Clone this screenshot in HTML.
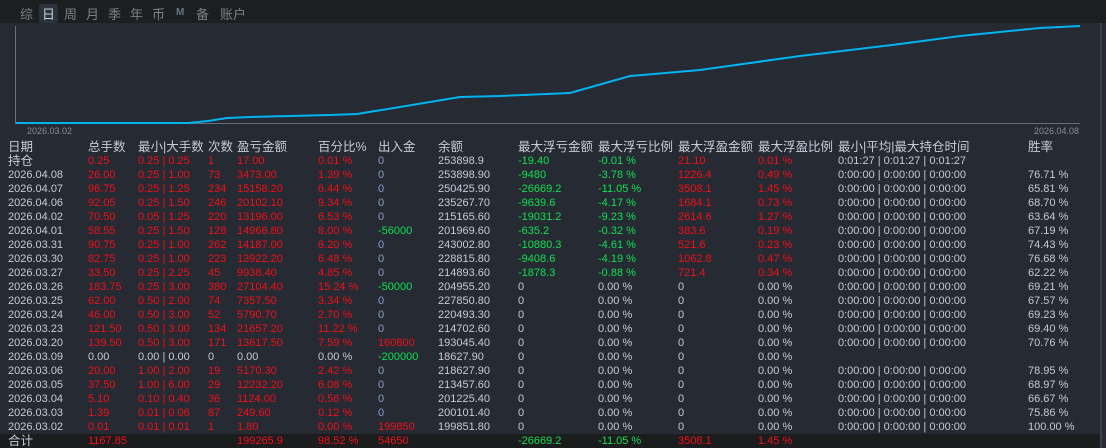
<!DOCTYPE html><html><head><meta charset="utf-8"><style>
body{margin:0;width:1106px;height:448px;background:#252a33;overflow:hidden;font-family:"Liberation Sans","Noto Sans CJK SC",sans-serif;position:relative}
.top{position:absolute;left:0;top:0;width:1106px;height:23px;background:#1d1e20}
.tab{position:absolute;top:4px;font-size:13px;color:#7d8088}
.sel{background:#2c323c;color:#c8ccd4;padding:0 3px;margin-left:-3px;border-radius:2px}
.r{position:absolute;left:0;height:14px;width:1100px;font-size:11px;line-height:14px;white-space:nowrap}
.r span{position:absolute;top:0}
.h{font-size:12.5px;color:#c5ccd6}
.w{color:#c5ccd6}.d{color:#f01018}.g{color:#10e050}.b{color:#8aa0c8}
</style></head><body>
<div class="top"></div>
<div class="tab" style="left:20px">综</div><div class="tab sel" style="left:42px">日</div><div class="tab" style="left:64px">周</div><div class="tab" style="left:86px">月</div><div class="tab" style="left:108px">季</div><div class="tab" style="left:130px">年</div><div class="tab" style="left:152px">币</div><div class="tab" style="left:176px;font-size:10px;top:7px;color:#6a7488;font-weight:bold">M</div><div class="tab" style="left:196px">备</div><div class="tab" style="left:220px">账户</div>
<div style="position:absolute;left:1100px;top:23px;width:2px;height:425px;background:#3a3f48"></div>
<div style="position:absolute;left:0;top:434px;width:1100px;height:14px;background:#1b1c1e"></div>
<svg style="position:absolute;left:0;top:0" width="1106" height="448">
<line x1="15.5" y1="26" x2="15.5" y2="124" stroke="#6a6e76"/>
<line x1="15" y1="123.5" x2="1080" y2="123.5" stroke="#6a6e76"/>
<polyline fill="none" stroke="#00b4f0" stroke-width="2" points="16,123 188,123 208,121 227,118 250,117 290,116 330,115 357,114 400,107 460,97 500,96 570,93 630,76 700,70 800,56 900,44 960,36 1000,32 1040,28 1080,26"/>
<text x="27" y="134" font-size="9" fill="#8a8e96" font-family="Liberation Sans">2026.03.02</text>
<text x="1034" y="134" font-size="9" fill="#8a8e96" font-family="Liberation Sans">2026.04.08</text>
</svg>
<div id="t"></div>
<script>
const X=[8,88,138,208,237,318,378,438,518,598,678,758,838,1028];
const H=["日期","总手数","最小|大手数","次数","盈亏金额","百分比%","出入金","余额","最大浮亏金额","最大浮亏比例","最大浮盈金额","最大浮盈比例","最小|平均|最大持仓时间","胜率"];
const T="0:00:00 | 0:00:00 | 0:00:00";
const R=[
["持仓","0.25","0.25 | 0.25","1","17.00","0.01 %","0","253898.9","-19.40","-0.01 %","21.10","0.01 %","0:01:27 | 0:01:27 | 0:01:27",""],
["2026.04.08","26.00","0.25 | 1.00","73","3473.00","1.39 %","0","253898.90","-9480","-3.78 %","1226.4","0.49 %",T,"76.71 %"],
["2026.04.07","96.75","0.25 | 1.25","234","15158.20","6.44 %","0","250425.90","-26669.2","-11.05 %","3508.1","1.45 %",T,"65.81 %"],
["2026.04.06","92.05","0.25 | 1.50","246","20102.10","9.34 %","0","235267.70","-9639.6","-4.17 %","1684.1","0.73 %",T,"68.70 %"],
["2026.04.02","70.50","0.05 | 1.25","220","13196.00","6.53 %","0","215165.60","-19031.2","-9.23 %","2614.6","1.27 %",T,"63.64 %"],
["2026.04.01","58.55","0.25 | 1.50","128","14966.80","8.00 %","-56000","201969.60","-635.2","-0.32 %","383.6","0.19 %",T,"67.19 %"],
["2026.03.31","90.75","0.25 | 1.00","262","14187.00","6.20 %","0","243002.80","-10880.3","-4.61 %","521.6","0.23 %",T,"74.43 %"],
["2026.03.30","82.75","0.25 | 1.00","223","13922.20","6.48 %","0","228815.80","-9408.6","-4.19 %","1062.8","0.47 %",T,"76.68 %"],
["2026.03.27","33.50","0.25 | 2.25","45","9938.40","4.85 %","0","214893.60","-1878.3","-0.88 %","721.4","0.34 %",T,"62.22 %"],
["2026.03.26","183.75","0.25 | 3.00","380","27104.40","15.24 %","-50000","204955.20","0","0.00 %","0","0.00 %",T,"69.21 %"],
["2026.03.25","62.00","0.50 | 2.00","74","7357.50","3.34 %","0","227850.80","0","0.00 %","0","0.00 %",T,"67.57 %"],
["2026.03.24","46.00","0.50 | 3.00","52","5790.70","2.70 %","0","220493.30","0","0.00 %","0","0.00 %",T,"69.23 %"],
["2026.03.23","121.50","0.50 | 3.00","134","21657.20","11.22 %","0","214702.60","0","0.00 %","0","0.00 %",T,"69.40 %"],
["2026.03.20","139.50","0.50 | 3.00","171","13617.50","7.59 %","160800","193045.40","0","0.00 %","0","0.00 %",T,"70.76 %"],
["2026.03.09","0.00","0.00 | 0.00","0","0.00","0.00 %","-200000","18627.90","0","0.00 %","0","0.00 %","",""],
["2026.03.06","20.00","1.00 | 2.00","19","5170.30","2.42 %","0","218627.90","0","0.00 %","0","0.00 %",T,"78.95 %"],
["2026.03.05","37.50","1.00 | 6.00","29","12232.20","6.08 %","0","213457.60","0","0.00 %","0","0.00 %",T,"68.97 %"],
["2026.03.04","5.10","0.10 | 0.40","36","1124.00","0.56 %","0","201225.40","0","0.00 %","0","0.00 %",T,"66.67 %"],
["2026.03.03","1.39","0.01 | 0.06","87","249.60","0.12 %","0","200101.40","0","0.00 %","0","0.00 %",T,"75.86 %"],
["2026.03.02","0.01","0.01 | 0.01","1","1.80","0.00 %","199850","199851.80","0","0.00 %","0","0.00 %",T,"100.00 %"],
["合计","1167.85","","","199265.9","98.52 %","54650","","-26669.2","-11.05 %","3508.1","1.45 %","",""]];
let h='<div class="r h" style="top:140px">'+H.map((s,i)=>`<span style="left:${X[i]}px">${s}</span>`).join('')+'</div>';
R.forEach((r,k)=>{const y=154+k*14;h+=`<div class="r" style="top:${y}px">`;r.forEach((s,i)=>{let c='w';
if(i==0&&k==0||i==0&&k==20)c='w h';
else if(i>=1&&i<=5){c=k==14?'w':'d';}
else if(i==6){c=s.startsWith('-')?'g':(s==='0'?'b':'d');}
else if(i==8||i==9){c=(s==='0'||s==='0.00 %')?'w':'g';}
else if(i==10||i==11){c=(s==='0'||s==='0.00 %')?'w':'d';}
h+=`<span class="${c}" style="left:${X[i]}px">${s}</span>`;});h+='</div>';});
document.getElementById('t').innerHTML=h;
</script>
</body></html>
